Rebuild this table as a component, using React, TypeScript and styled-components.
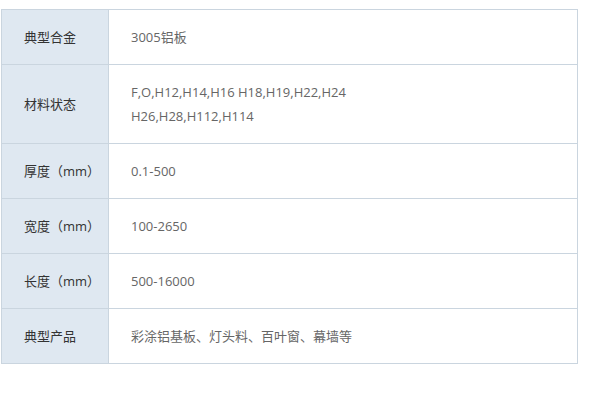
import styled, { createGlobalStyle } from "styled-components";

const GlobalStyle = createGlobalStyle`
  body {
    margin: 0;
    background: #ffffff;
    font-family: "Open Sans", "Noto Sans CJK SC", sans-serif;
  }
`;

const specs = [
  { label: "典型合金", value: ["3005铝板"] },
  {
    label: "材料状态",
    value: ["F,O,H12,H14,H16 H18,H19,H22,H24", "H26,H28,H112,H114"],
  },
  { label: "厚度（mm）", value: ["0.1-500"] },
  { label: "宽度（mm）", value: ["100-2650"] },
  { label: "长度（mm）", value: ["500-16000"] },
  { label: "典型产品", value: ["彩涂铝基板、灯头料、百叶窗、幕墙等"] },
];

export default function App() {
  return (
    <>
      <GlobalStyle />
      <Wrapper>
        <SpecTable>
          <colgroup>
            <col style={{ width: 107 }} />
            <col />
          </colgroup>
          <tbody>
            {specs.map((row) => (
              <tr key={row.label}>
                <LabelCell>{row.label}</LabelCell>
                <ValueCell>
                  {row.value.map((line) => (
                    <Line key={line}>{line}</Line>
                  ))}
                </ValueCell>
              </tr>
            ))}
          </tbody>
        </SpecTable>
      </Wrapper>
    </>
  );
}

const Wrapper = styled.div`
  padding: 9px 0 0 1px;
`;

const SpecTable = styled.table`
  width: 577px;
  table-layout: fixed;
  border-collapse: collapse;
  font-size: 13px;
`;

const Cell = styled.td`
  border: 1px solid #cad5df;
  padding: 15px 0 15px 22px;
  height: 24px;
  line-height: 24px;
  vertical-align: middle;
  text-align: left;
  white-space: nowrap;
`;

const LabelCell = styled(Cell)`
  background: #dfe8f1;
  color: #333333;
`;

const ValueCell = styled(Cell)`
  color: #666666;
`;

const Line = styled.div``;
